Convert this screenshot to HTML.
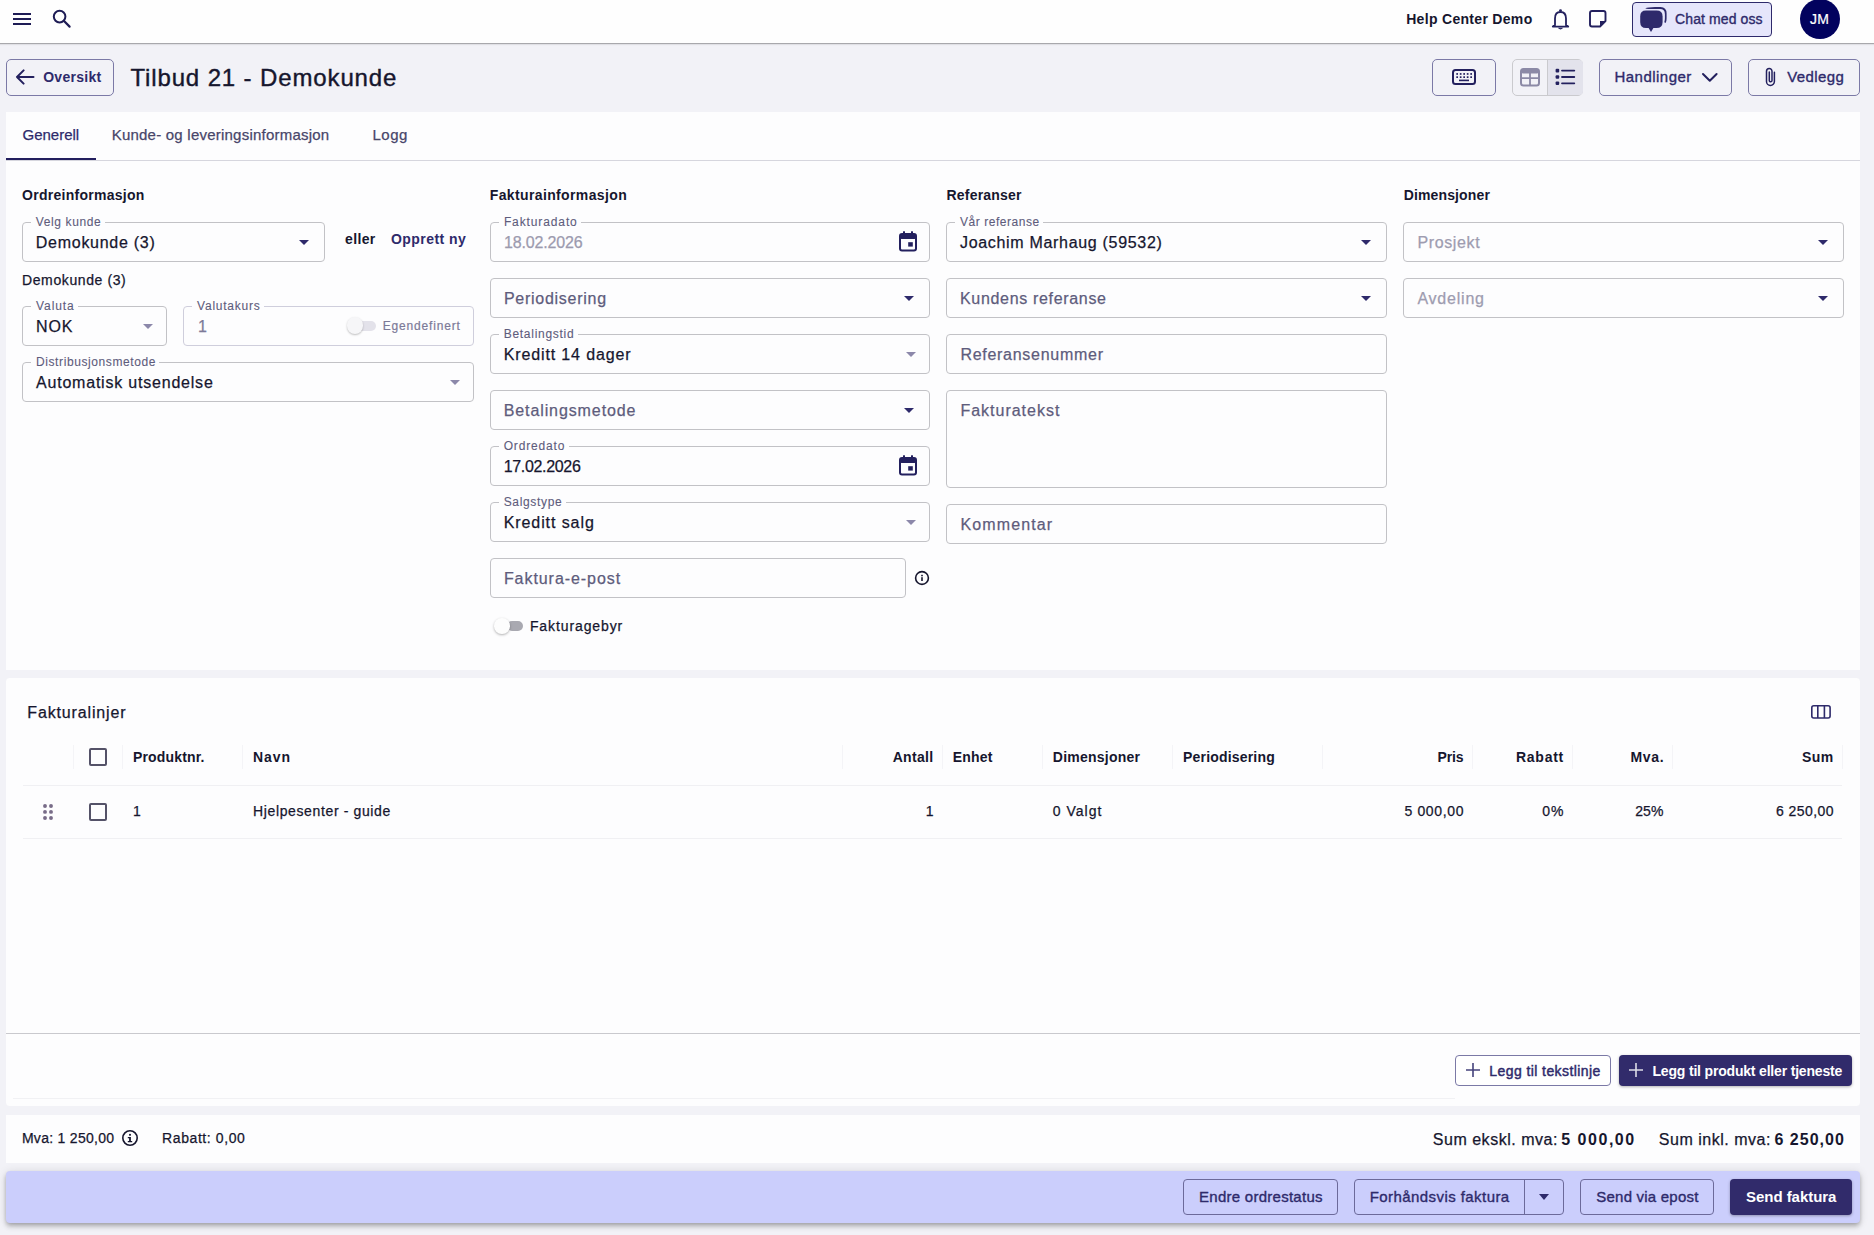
<!DOCTYPE html>
<html><head><meta charset="utf-8"><title>Tilbud 21 - Demokunde</title>
<style>
html,body{margin:0;padding:0;}
body{width:1874px;height:1235px;overflow:hidden;position:relative;background:#f2f2f7;font-family:"Liberation Sans", sans-serif;}
</style></head><body>
<div style="position:absolute;left:0px;top:0px;width:1874px;height:44px;background:#fefefe;border-radius:0px;box-sizing:border-box;border-bottom:1px solid #a8a8ac;box-shadow:0 1px 1px rgba(0,0,0,0.07);"></div>
<svg style="position:absolute;left:13px;top:12px" width="18" height="14" viewBox="0 0 18 14"><rect x="0" y="1" width="18" height="2" fill="#1e1c55"/><rect x="0" y="6" width="18" height="2" fill="#1e1c55"/><rect x="0" y="11" width="18" height="2" fill="#1e1c55"/></svg>
<svg style="position:absolute;left:52px;top:9px" width="20" height="20" viewBox="0 0 20 20"><circle cx="7.6" cy="7.6" r="5.8" fill="none" stroke="#1e1c55" stroke-width="2"/><path d="M11.8 11.8 L17.6 17.6" stroke="#1e1c55" stroke-width="2.2" stroke-linecap="round"/></svg>
<svg style="position:absolute;left:1551px;top:8px" width="19" height="22" viewBox="0 0 19 22"><path d="M4 17 L4 10.5 Q4 4 9.5 4 Q15 4 15 10.5 L15 17 L17.2 18.6 L1.8 18.6 Z" fill="none" stroke="#23205e" stroke-width="1.8" stroke-linejoin="round"/><circle cx="9.5" cy="2.6" r="1.4" fill="#23205e"/><path d="M7.6 20.2 L11.4 20.2 Q9.5 22 7.6 20.2 Z" fill="#23205e" stroke="#23205e" stroke-width="0.8"/></svg>
<svg style="position:absolute;left:1588px;top:10px" width="20" height="18" viewBox="0 0 20 18"><path d="M2 3 Q2 1 4 1 L15.5 1 Q17.5 1 17.5 3 L17.5 11 L12 16.5 L4 16.5 Q2 16.5 2 14.5 Z" fill="none" stroke="#23205e" stroke-width="1.9" stroke-linejoin="round"/><path d="M17.5 11 L12 11 L12 16.5 Z" fill="#23205e"/></svg>
<div style="position:absolute;left:1632px;top:2px;width:140px;height:35px;background:#e6e6fb;border:1.2px solid #2e2a6b;border-radius:4px;box-sizing:border-box;"></div>
<svg style="position:absolute;left:1639px;top:6px" width="28" height="27" viewBox="0 0 28 27"><path d="M6.2 2.4 Q8.5 0.9 16 0.9 L21.5 0.9 Q27.6 0.9 27.6 7.5 L27.6 12.5 Q27.6 15.8 26.6 17 L25.3 16.2 Q25.9 14.5 25.9 12 L25.9 8.2 Q25.9 3.1 21 3.1 L13 3.1 Q8.5 3.1 6.2 2.4 Z" fill="#2e2a6b"/><path d="M1.2 10.5 Q1.2 4.6 7 4.6 L17.5 4.6 Q23.6 4.6 23.6 10.5 L23.6 16 Q23.6 22 17.5 22 L7 22 Q1.2 22 1.2 16 Z" fill="#2e2a6b"/><path d="M9.3 21.5 L12 26 L14.7 21.5 Z" fill="#2e2a6b"/></svg>
<div style="position:absolute;left:1800px;top:-1px;width:40px;height:40px;border-radius:50%;background:#02025e"></div>
<div style="position:absolute;left:6px;top:59px;width:108px;height:37px;background:transparent;border:1px solid #7b79a6;border-radius:5px;box-sizing:border-box;"></div>
<svg style="position:absolute;left:15px;top:69px" width="20" height="16" viewBox="0 0 20 16"><path d="M18.5 8 L2 8 M8.6 1.4 L2 8 L8.6 14.6" fill="none" stroke="#23205e" stroke-width="2" stroke-linecap="round" stroke-linejoin="round"/></svg>
<div style="position:absolute;left:1432px;top:59px;width:64px;height:37px;background:transparent;border:1px solid #7b79a6;border-radius:5px;box-sizing:border-box;"></div>
<svg style="position:absolute;left:1451px;top:68px" width="26" height="18" viewBox="0 0 26 18"><rect x="2" y="2" width="22" height="14" rx="2.5" fill="none" stroke="#23205e" stroke-width="2"/><rect x="5.3" y="5.1" width="1.7" height="1.7" fill="#23205e"/><rect x="5.3" y="8.3" width="1.7" height="1.7" fill="#23205e"/><rect x="8.8" y="5.1" width="1.7" height="1.7" fill="#23205e"/><rect x="8.8" y="8.3" width="1.7" height="1.7" fill="#23205e"/><rect x="12.3" y="5.1" width="1.7" height="1.7" fill="#23205e"/><rect x="12.3" y="8.3" width="1.7" height="1.7" fill="#23205e"/><rect x="15.8" y="5.1" width="1.7" height="1.7" fill="#23205e"/><rect x="15.8" y="8.3" width="1.7" height="1.7" fill="#23205e"/><rect x="19.3" y="5.1" width="1.7" height="1.7" fill="#23205e"/><rect x="19.3" y="8.3" width="1.7" height="1.7" fill="#23205e"/><rect x="8" y="11.6" width="10" height="1.6" fill="#23205e"/></svg>
<div style="position:absolute;left:1512px;top:59px;width:71px;height:37px;background:#f2f2f7;border:1px solid #cacace;border-radius:5px;box-sizing:border-box;"></div>
<div style="position:absolute;left:1547px;top:60px;width:35px;height:35px;background:#e3e3ec;border-left:1px solid #cacace;border-radius:0 4px 4px 0"></div>
<svg style="position:absolute;left:1519px;top:67px" width="22" height="20" viewBox="0 0 22 20"><rect x="2" y="2" width="18" height="16.5" rx="2.5" fill="none" stroke="#8c8aa6" stroke-width="2"/><rect x="2" y="2" width="18" height="4.5" rx="2" fill="#8c8aa6"/><path d="M11 6 L11 18 M2 11.2 L20 11.2" stroke="#8c8aa6" stroke-width="1.8"/></svg>
<svg style="position:absolute;left:1554px;top:67px" width="22" height="20" viewBox="0 0 22 20"><rect x="1.6" y="1.8" width="3.6" height="3.6" rx="1" fill="#23205e"/><rect x="1.6" y="8.2" width="3.6" height="3.6" rx="1" fill="#23205e"/><rect x="1.6" y="14.5" width="3.6" height="3.6" rx="1" fill="#23205e"/><path d="M8 3.6 L20.3 3.6 M8 10 L20.3 10 M8 16.3 L20.3 16.3" stroke="#23205e" stroke-width="1.8" stroke-linecap="round"/></svg>
<div style="position:absolute;left:1599px;top:59px;width:133px;height:37px;background:transparent;border:1px solid #7b79a6;border-radius:5px;box-sizing:border-box;"></div>
<svg style="position:absolute;left:1701px;top:72px" width="18" height="11" viewBox="0 0 18 11"><path d="M2 2 L8.8 8.8 L15.6 2" fill="none" stroke="#23205e" stroke-width="2" stroke-linecap="round" stroke-linejoin="round"/></svg>
<div style="position:absolute;left:1748px;top:59px;width:112px;height:37px;background:transparent;border:1px solid #7b79a6;border-radius:5px;box-sizing:border-box;"></div>
<svg style="position:absolute;left:1763px;top:66px" width="14" height="22" viewBox="0 0 14 22"><path d="M11.4 6.2 L11.4 15.5 A3.95 3.95 0 0 1 3.5 15.5 L3.5 5.2 A2.75 2.75 0 0 1 9.0 5.2 L9.0 14.5 A1.35 1.35 0 0 1 6.3 14.5 L6.3 6" fill="none" stroke="#23205e" stroke-width="1.5" stroke-linecap="round"/></svg>
<div style="position:absolute;left:6px;top:112px;width:1854px;height:558px;background:#fdfdfe;border-radius:0px;box-sizing:border-box;"></div>
<div style="position:absolute;left:6px;top:160px;width:1854px;height:1px;background:#d6d6de;border-radius:0px;box-sizing:border-box;"></div>
<div style="position:absolute;left:6px;top:158px;width:90px;height:2px;background:#221e5e;border-radius:0px;box-sizing:border-box;"></div>
<div style="position:absolute;left:22px;top:222px;width:303px;height:40px;background:transparent;border:1px solid #c2c2c6;border-radius:4px;box-sizing:border-box;"></div>
<div style="position:absolute;left:31px;top:221px;width:74px;height:3px;background:#fdfdfe"></div>
<svg style="position:absolute;left:299px;top:240px" width="10" height="5" viewBox="0 0 10 5"><path d="M0 0 L10 0 L5.0 5 Z" fill="#2e2a6b"/></svg>
<div style="position:absolute;left:22px;top:306px;width:145px;height:40px;background:transparent;border:1px solid #c2c2c6;border-radius:4px;box-sizing:border-box;"></div>
<div style="position:absolute;left:31px;top:305px;width:46.8px;height:3px;background:#fdfdfe"></div>
<svg style="position:absolute;left:143px;top:324px" width="10" height="5" viewBox="0 0 10 5"><path d="M0 0 L10 0 L5.0 5 Z" fill="#8c88aa"/></svg>
<div style="position:absolute;left:183px;top:306px;width:291px;height:40px;background:transparent;border:1px solid #cfcedc;border-radius:4px;box-sizing:border-box;"></div>
<div style="position:absolute;left:192px;top:305px;width:71.6px;height:3px;background:#fdfdfe"></div>
<div style="position:absolute;left:349px;top:321px;width:27px;height:10px;border-radius:5px;background:#e3e2ea"></div>
<div style="position:absolute;left:346.5px;top:317.3px;width:16.5px;height:16.5px;border-radius:50%;background:#f6f6f8;box-shadow:0 1px 2px rgba(0,0,0,0.25)"></div>
<div style="position:absolute;left:22px;top:362px;width:452px;height:40px;background:transparent;border:1px solid #c2c2c6;border-radius:4px;box-sizing:border-box;"></div>
<div style="position:absolute;left:31px;top:361px;width:128.4px;height:3px;background:#fdfdfe"></div>
<svg style="position:absolute;left:450px;top:380px" width="10" height="5" viewBox="0 0 10 5"><path d="M0 0 L10 0 L5.0 5 Z" fill="#8c88aa"/></svg>
<div style="position:absolute;left:490px;top:222px;width:440px;height:40px;background:transparent;border:1px solid #c2c2c6;border-radius:4px;box-sizing:border-box;"></div>
<div style="position:absolute;left:499px;top:221px;width:81.9px;height:3px;background:#fdfdfe"></div>
<svg style="position:absolute;left:899px;top:231px" width="18" height="21" viewBox="0 0 18 21"><rect x="1" y="3" width="16" height="16.5" rx="2" fill="none" stroke="#23205e" stroke-width="2"/><rect x="1" y="3" width="16" height="5" rx="1.5" fill="#23205e"/><rect x="4" y="0.3" width="2" height="3.5" fill="#23205e"/><rect x="12" y="0.3" width="2" height="3.5" fill="#23205e"/><rect x="9.2" y="11.2" width="4.6" height="4.4" fill="#23205e"/></svg>
<div style="position:absolute;left:490px;top:278px;width:440px;height:40px;background:transparent;border:1px solid #c2c2c6;border-radius:4px;box-sizing:border-box;"></div>
<svg style="position:absolute;left:904px;top:296px" width="10" height="5" viewBox="0 0 10 5"><path d="M0 0 L10 0 L5.0 5 Z" fill="#2e2a6b"/></svg>
<div style="position:absolute;left:490px;top:334px;width:440px;height:40px;background:transparent;border:1px solid #c2c2c6;border-radius:4px;box-sizing:border-box;"></div>
<div style="position:absolute;left:499px;top:333px;width:79px;height:3px;background:#fdfdfe"></div>
<svg style="position:absolute;left:906px;top:352px" width="10" height="5" viewBox="0 0 10 5"><path d="M0 0 L10 0 L5.0 5 Z" fill="#8c88aa"/></svg>
<div style="position:absolute;left:490px;top:390px;width:440px;height:40px;background:transparent;border:1px solid #c2c2c6;border-radius:4px;box-sizing:border-box;"></div>
<svg style="position:absolute;left:904px;top:408px" width="10" height="5" viewBox="0 0 10 5"><path d="M0 0 L10 0 L5.0 5 Z" fill="#2e2a6b"/></svg>
<div style="position:absolute;left:490px;top:446px;width:440px;height:40px;background:transparent;border:1px solid #c2c2c6;border-radius:4px;box-sizing:border-box;"></div>
<div style="position:absolute;left:499px;top:445px;width:69.7px;height:3px;background:#fdfdfe"></div>
<svg style="position:absolute;left:899px;top:455px" width="18" height="21" viewBox="0 0 18 21"><rect x="1" y="3" width="16" height="16.5" rx="2" fill="none" stroke="#23205e" stroke-width="2"/><rect x="1" y="3" width="16" height="5" rx="1.5" fill="#23205e"/><rect x="4" y="0.3" width="2" height="3.5" fill="#23205e"/><rect x="12" y="0.3" width="2" height="3.5" fill="#23205e"/><rect x="9.2" y="11.2" width="4.6" height="4.4" fill="#23205e"/></svg>
<div style="position:absolute;left:490px;top:502px;width:440px;height:40px;background:transparent;border:1px solid #c2c2c6;border-radius:4px;box-sizing:border-box;"></div>
<div style="position:absolute;left:499px;top:501px;width:67px;height:3px;background:#fdfdfe"></div>
<svg style="position:absolute;left:906px;top:520px" width="10" height="5" viewBox="0 0 10 5"><path d="M0 0 L10 0 L5.0 5 Z" fill="#8c88aa"/></svg>
<div style="position:absolute;left:490px;top:558px;width:416px;height:40px;background:transparent;border:1px solid #c2c2c6;border-radius:4px;box-sizing:border-box;"></div>
<svg style="position:absolute;left:914px;top:570px" width="16" height="16" viewBox="0 0 16 16"><circle cx="8" cy="8" r="6.4" fill="none" stroke="#16162e" stroke-width="1.6"/><rect x="7.2" y="4.8" width="1.6" height="1.5" fill="#16162e"/><rect x="7.2" y="7.2" width="1.6" height="3.8" fill="#16162e"/></svg>
<div style="position:absolute;left:507px;top:621px;width:16px;height:10px;border-radius:5px;background:#a9a9b1"></div>
<div style="position:absolute;left:494px;top:618.3px;width:15.5px;height:15.5px;border-radius:50%;background:#fdfdfd;box-shadow:0 1px 2.5px rgba(0,0,0,0.3)"></div>
<div style="position:absolute;left:946px;top:222px;width:441px;height:40px;background:transparent;border:1px solid #c2c2c6;border-radius:4px;box-sizing:border-box;"></div>
<div style="position:absolute;left:955px;top:221px;width:88.1px;height:3px;background:#fdfdfe"></div>
<svg style="position:absolute;left:1361px;top:240px" width="10" height="5" viewBox="0 0 10 5"><path d="M0 0 L10 0 L5.0 5 Z" fill="#2e2a6b"/></svg>
<div style="position:absolute;left:946px;top:278px;width:441px;height:40px;background:transparent;border:1px solid #c2c2c6;border-radius:4px;box-sizing:border-box;"></div>
<svg style="position:absolute;left:1361px;top:296px" width="10" height="5" viewBox="0 0 10 5"><path d="M0 0 L10 0 L5.0 5 Z" fill="#2e2a6b"/></svg>
<div style="position:absolute;left:946px;top:334px;width:441px;height:40px;background:transparent;border:1px solid #c2c2c6;border-radius:4px;box-sizing:border-box;"></div>
<div style="position:absolute;left:946px;top:390px;width:441px;height:98px;background:transparent;border:1px solid #c2c2c6;border-radius:4px;box-sizing:border-box;"></div>
<div style="position:absolute;left:946px;top:504px;width:441px;height:40px;background:transparent;border:1px solid #c2c2c6;border-radius:4px;box-sizing:border-box;"></div>
<div style="position:absolute;left:1403px;top:222px;width:441px;height:40px;background:transparent;border:1px solid #c2c2c6;border-radius:4px;box-sizing:border-box;"></div>
<svg style="position:absolute;left:1818px;top:240px" width="10" height="5" viewBox="0 0 10 5"><path d="M0 0 L10 0 L5.0 5 Z" fill="#2e2a6b"/></svg>
<div style="position:absolute;left:1403px;top:278px;width:441px;height:40px;background:transparent;border:1px solid #c2c2c6;border-radius:4px;box-sizing:border-box;"></div>
<svg style="position:absolute;left:1818px;top:296px" width="10" height="5" viewBox="0 0 10 5"><path d="M0 0 L10 0 L5.0 5 Z" fill="#2e2a6b"/></svg>
<div style="position:absolute;left:6px;top:678px;width:1854px;height:428px;background:#fdfdfe;border-radius:4px;box-sizing:border-box;"></div>
<svg style="position:absolute;left:1810px;top:704px" width="22" height="16" viewBox="0 0 22 16"><rect x="1.8" y="1.7" width="18.3" height="12.3" rx="2" fill="none" stroke="#2e2a6b" stroke-width="1.6"/><path d="M7.8 1.7 L7.8 14 M14.4 1.7 L14.4 14" stroke="#2e2a6b" stroke-width="1.6"/></svg>
<div style="position:absolute;left:73px;top:745px;width:1px;height:24px;background:#f4f4f7"></div>
<div style="position:absolute;left:122px;top:745px;width:1px;height:24px;background:#f4f4f7"></div>
<div style="position:absolute;left:242px;top:745px;width:1px;height:24px;background:#f4f4f7"></div>
<div style="position:absolute;left:842px;top:745px;width:1px;height:24px;background:#f4f4f7"></div>
<div style="position:absolute;left:942px;top:745px;width:1px;height:24px;background:#f4f4f7"></div>
<div style="position:absolute;left:1042px;top:745px;width:1px;height:24px;background:#f4f4f7"></div>
<div style="position:absolute;left:1172px;top:745px;width:1px;height:24px;background:#f4f4f7"></div>
<div style="position:absolute;left:1322px;top:745px;width:1px;height:24px;background:#f4f4f7"></div>
<div style="position:absolute;left:1472px;top:745px;width:1px;height:24px;background:#f4f4f7"></div>
<div style="position:absolute;left:1572px;top:745px;width:1px;height:24px;background:#f4f4f7"></div>
<div style="position:absolute;left:1672px;top:745px;width:1px;height:24px;background:#f4f4f7"></div>
<div style="position:absolute;left:1842px;top:745px;width:1px;height:24px;background:#f4f4f7"></div>
<div style="position:absolute;left:89px;top:748px;width:18px;height:18px;background:transparent;border:2px solid #545268;border-radius:2px;box-sizing:border-box;"></div>
<div style="position:absolute;left:23px;top:785px;width:1819px;height:1px;background:#f0f0f3;border-radius:0px;box-sizing:border-box;"></div>
<svg style="position:absolute;left:42px;top:803px" width="12" height="18" viewBox="0 0 12 18"><circle cx="3" cy="3" r="1.95" fill="#786c88"/><circle cx="3" cy="8.9" r="1.95" fill="#786c88"/><circle cx="3" cy="15" r="1.95" fill="#786c88"/><circle cx="9" cy="3" r="1.95" fill="#786c88"/><circle cx="9" cy="8.9" r="1.95" fill="#786c88"/><circle cx="9" cy="15" r="1.95" fill="#786c88"/></svg>
<div style="position:absolute;left:89px;top:803px;width:18px;height:18px;background:transparent;border:2px solid #545268;border-radius:2px;box-sizing:border-box;"></div>
<div style="position:absolute;left:23px;top:838px;width:1819px;height:1px;background:#f0f0f3;border-radius:0px;box-sizing:border-box;"></div>
<div style="position:absolute;left:6px;top:1033px;width:1854px;height:1px;background:#c9c9ce;border-radius:0px;box-sizing:border-box;"></div>
<div style="position:absolute;left:13px;top:1098px;width:1442px;height:1px;background:#f1f1f4;border-radius:0px;box-sizing:border-box;"></div>
<div style="position:absolute;left:1455px;top:1055px;width:156px;height:31px;background:#ffffff;border:1px solid #7b79a6;border-radius:4px;box-sizing:border-box;"></div>
<svg style="position:absolute;left:1465px;top:1062px" width="16" height="16" viewBox="0 0 16 16"><path d="M8 1 L8 15 M1 8 L15 8" stroke="#45437c" stroke-width="1.6"/></svg>
<div style="position:absolute;left:1619px;top:1055px;width:233px;height:31px;background:#312b6b;border-radius:4px;box-sizing:border-box;box-shadow:0 1px 3px rgba(0,0,0,0.3);"></div>
<svg style="position:absolute;left:1628px;top:1062px" width="16" height="16" viewBox="0 0 16 16"><path d="M8 1 L8 15 M1 8 L15 8" stroke="#dcdce6" stroke-width="1.6"/></svg>
<div style="position:absolute;left:6px;top:1115px;width:1854px;height:48px;background:#fdfdfe;border-radius:0px;box-sizing:border-box;"></div>
<svg style="position:absolute;left:121px;top:1129px" width="18" height="18" viewBox="0 0 18 18"><circle cx="9" cy="9" r="7.2" fill="none" stroke="#16162e" stroke-width="1.6"/><rect x="8.1" y="4.9" width="1.8" height="1.8" fill="#16162e"/><path d="M6.8 8 L9.9 8 L9.9 12 L11.2 12 L11.2 13.2 L6.8 13.2 L6.8 12 L8.1 12 L8.1 9.2 L6.8 9.2 Z" fill="#16162e"/></svg>
<div style="position:absolute;left:6px;top:1171px;width:1854px;height:52px;background:#cbcefc;border-radius:4px;box-sizing:border-box;box-shadow:0px 2px 4px -1px rgba(0,0,0,0.2),0px 4px 5px 0px rgba(0,0,0,0.14),0px 1px 10px 0px rgba(0,0,0,0.12);"></div>
<div style="position:absolute;left:1183px;top:1179px;width:155px;height:36px;background:transparent;border:1px solid #6c6a9a;border-radius:4px;box-sizing:border-box;"></div>
<div style="position:absolute;left:1354px;top:1179px;width:210px;height:36px;background:transparent;border:1px solid #6c6a9a;border-radius:4px;box-sizing:border-box;"></div>
<div style="position:absolute;left:1524px;top:1179px;width:1px;height:36px;background:#6c6a9a;border-radius:0px;box-sizing:border-box;"></div>
<svg style="position:absolute;left:1539px;top:1194px" width="10" height="6" viewBox="0 0 10 6"><path d="M0 0 L10 0 L5.0 6 Z" fill="#2e2a6b"/></svg>
<div style="position:absolute;left:1580px;top:1179px;width:134px;height:36px;background:transparent;border:1px solid #6c6a9a;border-radius:4px;box-sizing:border-box;"></div>
<div style="position:absolute;left:1730px;top:1179px;width:122px;height:36px;background:#312b6b;border-radius:4px;box-sizing:border-box;box-shadow:0 1px 3px rgba(0,0,0,0.3);"></div>
<div style="position:absolute;left:1406.20px;top:12.00px;font-size:14px;line-height:14px;font-weight:700;color:#16162e;letter-spacing:0.309px;white-space:pre">Help Center Demo</div>
<div style="position:absolute;left:1675.10px;top:12.40px;font-size:14px;line-height:14px;font-weight:400;color:#2e2a6b;letter-spacing:0.093px;white-space:pre;-webkit-text-stroke:0.35px #2e2a6b">Chat med oss</div>
<div style="position:absolute;left:1810.00px;top:12.00px;font-size:14px;line-height:14px;font-weight:400;color:#ffffff;letter-spacing:0.328px;white-space:pre;-webkit-text-stroke:0.2px #ffffff">JM</div>
<div style="position:absolute;left:43.20px;top:70.20px;font-size:14px;line-height:14px;font-weight:700;color:#2e2a6b;letter-spacing:0.279px;white-space:pre">Oversikt</div>
<div style="position:absolute;left:130.40px;top:66.00px;font-size:24px;line-height:24px;font-weight:400;color:#16162e;letter-spacing:0.871px;white-space:pre;-webkit-text-stroke:0.4px #16162e">Tilbud 21 - Demokunde</div>
<div style="position:absolute;left:1614.50px;top:69.20px;font-size:15px;line-height:15px;font-weight:400;color:#2e2a6b;letter-spacing:0.473px;white-space:pre;-webkit-text-stroke:0.35px #2e2a6b">Handlinger</div>
<div style="position:absolute;left:1787.20px;top:69.20px;font-size:15px;line-height:15px;font-weight:400;color:#2e2a6b;letter-spacing:0.411px;white-space:pre;-webkit-text-stroke:0.35px #2e2a6b">Vedlegg</div>
<div style="position:absolute;left:22.50px;top:127.20px;font-size:15px;line-height:15px;font-weight:400;color:#2e2a6b;letter-spacing:-0.000px;white-space:pre;-webkit-text-stroke:0.25px #2e2a6b">Generell</div>
<div style="position:absolute;left:111.70px;top:127.20px;font-size:15px;line-height:15px;font-weight:400;color:#48466a;letter-spacing:0.226px;white-space:pre;-webkit-text-stroke:0.25px #48466a">Kunde- og leveringsinformasjon</div>
<div style="position:absolute;left:372.40px;top:127.20px;font-size:15px;line-height:15px;font-weight:400;color:#48466a;letter-spacing:0.542px;white-space:pre;-webkit-text-stroke:0.25px #48466a">Logg</div>
<div style="position:absolute;left:22.00px;top:188.00px;font-size:14px;line-height:14px;font-weight:700;color:#16162e;letter-spacing:0.270px;white-space:pre">Ordreinformasjon</div>
<div style="position:absolute;left:489.80px;top:188.00px;font-size:14px;line-height:14px;font-weight:700;color:#16162e;letter-spacing:0.365px;white-space:pre">Fakturainformasjon</div>
<div style="position:absolute;left:946.50px;top:188.00px;font-size:14px;line-height:14px;font-weight:700;color:#16162e;letter-spacing:0.205px;white-space:pre">Referanser</div>
<div style="position:absolute;left:1403.70px;top:188.00px;font-size:14px;line-height:14px;font-weight:700;color:#16162e;letter-spacing:0.139px;white-space:pre">Dimensjoner</div>
<div style="position:absolute;left:35.80px;top:215.50px;font-size:12px;line-height:12px;font-weight:400;color:#5e5c7c;letter-spacing:0.623px;white-space:pre;-webkit-text-stroke:0.1px #5e5c7c">Velg kunde</div>
<div style="position:absolute;left:35.80px;top:235.00px;font-size:16px;line-height:16px;font-weight:400;color:#16162e;letter-spacing:0.727px;white-space:pre;-webkit-text-stroke:0.25px #16162e">Demokunde (3)</div>
<div style="position:absolute;left:345.10px;top:232.00px;font-size:14px;line-height:14px;font-weight:700;color:#16162e;letter-spacing:0.347px;white-space:pre">eller</div>
<div style="position:absolute;left:391.00px;top:232.00px;font-size:14px;line-height:14px;font-weight:700;color:#2e2a6b;letter-spacing:0.435px;white-space:pre">Opprett ny</div>
<div style="position:absolute;left:22.00px;top:273.00px;font-size:14px;line-height:14px;font-weight:400;color:#16162e;letter-spacing:0.608px;white-space:pre;-webkit-text-stroke:0.25px #16162e">Demokunde (3)</div>
<div style="position:absolute;left:36.00px;top:300.00px;font-size:12px;line-height:12px;font-weight:400;color:#5e5c7c;letter-spacing:0.932px;white-space:pre;-webkit-text-stroke:0.1px #5e5c7c">Valuta</div>
<div style="position:absolute;left:36.00px;top:319.00px;font-size:16px;line-height:16px;font-weight:400;color:#16162e;letter-spacing:0.914px;white-space:pre;-webkit-text-stroke:0.25px #16162e">NOK</div>
<div style="position:absolute;left:197.10px;top:300.00px;font-size:12px;line-height:12px;font-weight:400;color:#5e5c7c;letter-spacing:0.754px;white-space:pre;-webkit-text-stroke:0.1px #5e5c7c">Valutakurs</div>
<div style="position:absolute;left:197.90px;top:319.00px;font-size:16px;line-height:16px;font-weight:400;color:#7c7a98;letter-spacing:0.000px;white-space:pre;-webkit-text-stroke:0.25px #7c7a98">1</div>
<div style="position:absolute;left:382.80px;top:320.00px;font-size:12px;line-height:12px;font-weight:400;color:#7c7a98;letter-spacing:0.812px;white-space:pre;-webkit-text-stroke:0.2px #7c7a98">Egendefinert</div>
<div style="position:absolute;left:36.00px;top:356.00px;font-size:12px;line-height:12px;font-weight:400;color:#5e5c7c;letter-spacing:0.593px;white-space:pre;-webkit-text-stroke:0.1px #5e5c7c">Distribusjonsmetode</div>
<div style="position:absolute;left:36.00px;top:375.30px;font-size:16px;line-height:16px;font-weight:400;color:#16162e;letter-spacing:0.791px;white-space:pre;-webkit-text-stroke:0.25px #16162e">Automatisk utsendelse</div>
<div style="position:absolute;left:503.90px;top:215.80px;font-size:12px;line-height:12px;font-weight:400;color:#5e5c7c;letter-spacing:0.885px;white-space:pre;-webkit-text-stroke:0.1px #5e5c7c">Fakturadato</div>
<div style="position:absolute;left:503.90px;top:235.00px;font-size:16px;line-height:16px;font-weight:400;color:#9c9aae;letter-spacing:-0.153px;white-space:pre;-webkit-text-stroke:0.25px #9c9aae">18.02.2026</div>
<div style="position:absolute;left:503.90px;top:291.00px;font-size:16px;line-height:16px;font-weight:400;color:#5e5c7c;letter-spacing:0.734px;white-space:pre;-webkit-text-stroke:0.25px #5e5c7c">Periodisering</div>
<div style="position:absolute;left:503.70px;top:328.00px;font-size:12px;line-height:12px;font-weight:400;color:#5e5c7c;letter-spacing:0.723px;white-space:pre;-webkit-text-stroke:0.1px #5e5c7c">Betalingstid</div>
<div style="position:absolute;left:503.70px;top:347.00px;font-size:16px;line-height:16px;font-weight:400;color:#16162e;letter-spacing:0.869px;white-space:pre;-webkit-text-stroke:0.25px #16162e">Kreditt 14 dager</div>
<div style="position:absolute;left:503.70px;top:403.00px;font-size:16px;line-height:16px;font-weight:400;color:#5e5c7c;letter-spacing:0.901px;white-space:pre;-webkit-text-stroke:0.25px #5e5c7c">Betalingsmetode</div>
<div style="position:absolute;left:503.70px;top:440.00px;font-size:12px;line-height:12px;font-weight:400;color:#5e5c7c;letter-spacing:0.834px;white-space:pre;-webkit-text-stroke:0.1px #5e5c7c">Ordredato</div>
<div style="position:absolute;left:503.70px;top:458.50px;font-size:16px;line-height:16px;font-weight:400;color:#16162e;letter-spacing:-0.331px;white-space:pre;-webkit-text-stroke:0.25px #16162e">17.02.2026</div>
<div style="position:absolute;left:503.70px;top:496.00px;font-size:12px;line-height:12px;font-weight:400;color:#5e5c7c;letter-spacing:0.662px;white-space:pre;-webkit-text-stroke:0.1px #5e5c7c">Salgstype</div>
<div style="position:absolute;left:503.70px;top:515.00px;font-size:16px;line-height:16px;font-weight:400;color:#16162e;letter-spacing:0.914px;white-space:pre;-webkit-text-stroke:0.25px #16162e">Kreditt salg</div>
<div style="position:absolute;left:503.90px;top:571.20px;font-size:16px;line-height:16px;font-weight:400;color:#5e5c7c;letter-spacing:0.943px;white-space:pre;-webkit-text-stroke:0.25px #5e5c7c">Faktura-e-post</div>
<div style="position:absolute;left:529.90px;top:618.60px;font-size:14px;line-height:14px;font-weight:400;color:#16162e;letter-spacing:0.901px;white-space:pre;-webkit-text-stroke:0.25px #16162e">Fakturagebyr</div>
<div style="position:absolute;left:960.00px;top:215.80px;font-size:12px;line-height:12px;font-weight:400;color:#5e5c7c;letter-spacing:0.533px;white-space:pre;-webkit-text-stroke:0.1px #5e5c7c">Vår referanse</div>
<div style="position:absolute;left:960.00px;top:235.00px;font-size:16px;line-height:16px;font-weight:400;color:#16162e;letter-spacing:0.683px;white-space:pre;-webkit-text-stroke:0.25px #16162e">Joachim Marhaug (59532)</div>
<div style="position:absolute;left:960.00px;top:291.00px;font-size:16px;line-height:16px;font-weight:400;color:#5e5c7c;letter-spacing:0.675px;white-space:pre;-webkit-text-stroke:0.25px #5e5c7c">Kundens referanse</div>
<div style="position:absolute;left:960.40px;top:347.00px;font-size:16px;line-height:16px;font-weight:400;color:#5e5c7c;letter-spacing:0.721px;white-space:pre;-webkit-text-stroke:0.25px #5e5c7c">Referansenummer</div>
<div style="position:absolute;left:960.40px;top:403.30px;font-size:16px;line-height:16px;font-weight:400;color:#5e5c7c;letter-spacing:0.997px;white-space:pre;-webkit-text-stroke:0.25px #5e5c7c">Fakturatekst</div>
<div style="position:absolute;left:960.40px;top:517.00px;font-size:16px;line-height:16px;font-weight:400;color:#5e5c7c;letter-spacing:1.137px;white-space:pre;-webkit-text-stroke:0.25px #5e5c7c">Kommentar</div>
<div style="position:absolute;left:1417.40px;top:235.00px;font-size:16px;line-height:16px;font-weight:400;color:#9e9cb0;letter-spacing:0.629px;white-space:pre;-webkit-text-stroke:0.25px #9e9cb0">Prosjekt</div>
<div style="position:absolute;left:1417.40px;top:291.00px;font-size:16px;line-height:16px;font-weight:400;color:#9e9cb0;letter-spacing:0.787px;white-space:pre;-webkit-text-stroke:0.25px #9e9cb0">Avdeling</div>
<div style="position:absolute;left:27.30px;top:705.00px;font-size:16px;line-height:16px;font-weight:400;color:#16162e;letter-spacing:0.856px;white-space:pre;-webkit-text-stroke:0.25px #16162e">Fakturalinjer</div>
<div style="position:absolute;left:133.00px;top:750.00px;font-size:14px;line-height:14px;font-weight:700;color:#16162e;letter-spacing:0.154px;white-space:pre">Produktnr.</div>
<div style="position:absolute;left:253.00px;top:750.00px;font-size:14px;line-height:14px;font-weight:700;color:#16162e;letter-spacing:0.922px;white-space:pre">Navn</div>
<div style="position:absolute;left:892.70px;top:750.00px;font-size:14px;line-height:14px;font-weight:700;color:#16162e;letter-spacing:0.322px;white-space:pre">Antall</div>
<div style="position:absolute;left:952.80px;top:750.00px;font-size:14px;line-height:14px;font-weight:700;color:#16162e;letter-spacing:0.202px;white-space:pre">Enhet</div>
<div style="position:absolute;left:1052.80px;top:750.00px;font-size:14px;line-height:14px;font-weight:700;color:#16162e;letter-spacing:0.239px;white-space:pre">Dimensjoner</div>
<div style="position:absolute;left:1183.00px;top:750.00px;font-size:14px;line-height:14px;font-weight:700;color:#16162e;letter-spacing:0.186px;white-space:pre">Periodisering</div>
<div style="position:absolute;left:1437.50px;top:750.00px;font-size:14px;line-height:14px;font-weight:700;color:#16162e;letter-spacing:-0.156px;white-space:pre">Pris</div>
<div style="position:absolute;left:1515.90px;top:750.00px;font-size:14px;line-height:14px;font-weight:700;color:#16162e;letter-spacing:0.767px;white-space:pre">Rabatt</div>
<div style="position:absolute;left:1630.50px;top:750.00px;font-size:14px;line-height:14px;font-weight:700;color:#16162e;letter-spacing:0.692px;white-space:pre">Mva.</div>
<div style="position:absolute;left:1802.10px;top:750.00px;font-size:14px;line-height:14px;font-weight:700;color:#16162e;letter-spacing:0.428px;white-space:pre">Sum</div>
<div style="position:absolute;left:133.00px;top:804.00px;font-size:14px;line-height:14px;font-weight:400;color:#16162e;letter-spacing:0.000px;white-space:pre;-webkit-text-stroke:0.25px #16162e">1</div>
<div style="position:absolute;left:253.00px;top:804.00px;font-size:14px;line-height:14px;font-weight:400;color:#16162e;letter-spacing:0.632px;white-space:pre;-webkit-text-stroke:0.25px #16162e">Hjelpesenter - guide</div>
<div style="position:absolute;left:925.70px;top:804.00px;font-size:14px;line-height:14px;font-weight:400;color:#16162e;letter-spacing:0.000px;white-space:pre;-webkit-text-stroke:0.25px #16162e">1</div>
<div style="position:absolute;left:1052.80px;top:804.00px;font-size:14px;line-height:14px;font-weight:400;color:#16162e;letter-spacing:0.992px;white-space:pre;-webkit-text-stroke:0.25px #16162e">0 Valgt</div>
<div style="position:absolute;left:1404.40px;top:804.00px;font-size:14px;line-height:14px;font-weight:400;color:#16162e;letter-spacing:0.657px;white-space:pre;-webkit-text-stroke:0.25px #16162e">5 000,00</div>
<div style="position:absolute;left:1542.30px;top:804.00px;font-size:14px;line-height:14px;font-weight:400;color:#16162e;letter-spacing:0.966px;white-space:pre;-webkit-text-stroke:0.25px #16162e">0%</div>
<div style="position:absolute;left:1635.20px;top:804.00px;font-size:14px;line-height:14px;font-weight:400;color:#16162e;letter-spacing:0.134px;white-space:pre;-webkit-text-stroke:0.25px #16162e">25%</div>
<div style="position:absolute;left:1775.90px;top:804.00px;font-size:14px;line-height:14px;font-weight:400;color:#16162e;letter-spacing:0.443px;white-space:pre;-webkit-text-stroke:0.25px #16162e">6 250,00</div>
<div style="position:absolute;left:1489.30px;top:1063.60px;font-size:14px;line-height:14px;font-weight:400;color:#2e2a6b;letter-spacing:0.416px;white-space:pre;-webkit-text-stroke:0.45px #2e2a6b">Legg til tekstlinje</div>
<div style="position:absolute;left:1652.50px;top:1063.60px;font-size:14px;line-height:14px;font-weight:700;color:#ffffff;letter-spacing:-0.182px;white-space:pre">Legg til produkt eller tjeneste</div>
<div style="position:absolute;left:21.90px;top:1130.60px;font-size:14px;line-height:14px;font-weight:400;color:#16162e;letter-spacing:0.289px;white-space:pre;-webkit-text-stroke:0.25px #16162e">Mva: 1 250,00</div>
<div style="position:absolute;left:162.10px;top:1130.60px;font-size:14px;line-height:14px;font-weight:400;color:#16162e;letter-spacing:0.584px;white-space:pre;-webkit-text-stroke:0.25px #16162e">Rabatt: 0,00</div>
<div style="position:absolute;left:1432.80px;top:1132.00px;font-size:16px;line-height:16px;font-weight:400;color:#16162e;letter-spacing:0.517px;white-space:pre;-webkit-text-stroke:0.25px #16162e">Sum ekskl. mva:</div>
<div style="position:absolute;left:1561.20px;top:1132.00px;font-size:16px;line-height:16px;font-weight:700;color:#16162e;letter-spacing:1.531px;white-space:pre">5 000,00</div>
<div style="position:absolute;left:1658.80px;top:1132.00px;font-size:16px;line-height:16px;font-weight:400;color:#16162e;letter-spacing:0.521px;white-space:pre;-webkit-text-stroke:0.25px #16162e">Sum inkl. mva:</div>
<div style="position:absolute;left:1774.40px;top:1132.00px;font-size:16px;line-height:16px;font-weight:700;color:#16162e;letter-spacing:1.031px;white-space:pre">6 250,00</div>
<div style="position:absolute;left:1199.00px;top:1189.20px;font-size:15px;line-height:15px;font-weight:400;color:#2e2a6b;letter-spacing:0.267px;white-space:pre;-webkit-text-stroke:0.35px #2e2a6b">Endre ordrestatus</div>
<div style="position:absolute;left:1369.70px;top:1189.20px;font-size:15px;line-height:15px;font-weight:400;color:#2e2a6b;letter-spacing:0.431px;white-space:pre;-webkit-text-stroke:0.35px #2e2a6b">Forhåndsvis faktura</div>
<div style="position:absolute;left:1596.30px;top:1189.20px;font-size:15px;line-height:15px;font-weight:400;color:#2e2a6b;letter-spacing:0.219px;white-space:pre;-webkit-text-stroke:0.35px #2e2a6b">Send via epost</div>
<div style="position:absolute;left:1746.10px;top:1189.20px;font-size:15px;line-height:15px;font-weight:700;color:#ffffff;letter-spacing:-0.051px;white-space:pre">Send faktura</div>
</body></html>
